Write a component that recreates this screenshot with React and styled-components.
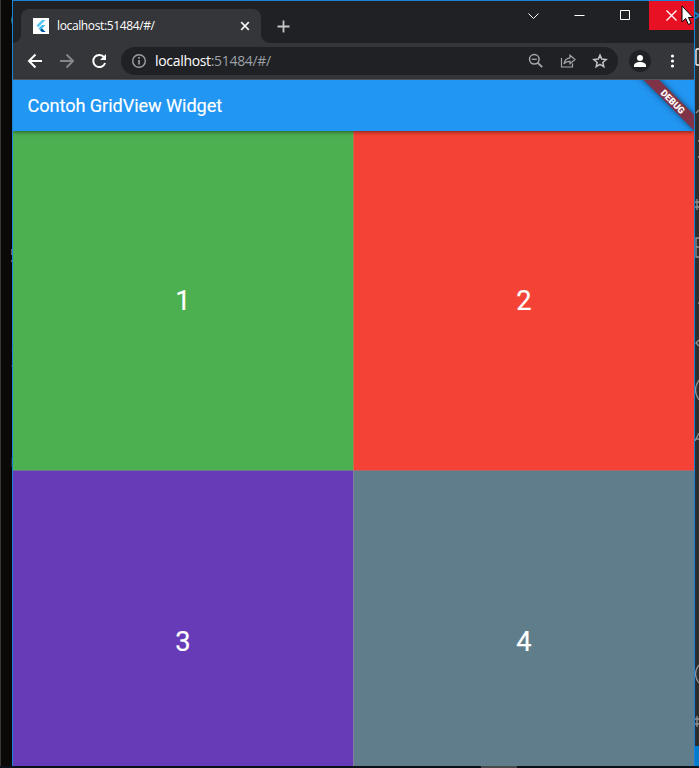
import React from "react";
import styled, { createGlobalStyle } from "styled-components";

const GlobalStyle = createGlobalStyle`
  *, *::before, *::after { box-sizing: border-box; }
  body { margin: 0; overflow: hidden; background: #0c0b0a; }
  svg { display: block; flex: none; }
`;

const Desktop = styled.div`
  position: relative;
  display: grid;
  grid-template-columns: 12px 683px 4px;
  grid-template-rows: 766px 2px;
  width: 699px;
  height: 768px;
`;

const LeftEdge = styled.div`
  border-left: 1px solid #373737;
  background: #0a0907;
`;

const BrowserWindow = styled.main`
  display: flex;
  flex-direction: column;
  min-height: 0;
  overflow: hidden;
  border: 1px solid #1883d7;
  border-bottom: 0;
  background: #202124;
`;

const EditorEdge = styled.aside`
  overflow: hidden;
  background: #2d2d2d;
`;

const Taskbar = styled.footer`
  grid-column: 1 / -1;
  display: flex;
  justify-content: flex-start;
  padding-left: 481px;
  background: #0a1118;
`;

const TaskIndicator = styled.div`
  width: 36px;
  background: #47494c;
`;

const TabStrip = styled.header`
  display: flex;
  flex: none;
  height: 42px;
`;

const Tab = styled.div`
  position: relative;
  display: flex;
  align-items: center;
  width: 240px;
  height: 34px;
  margin: 8px 0 0 8px;
  padding: 0 10px 0 12px;
  border-radius: 8px 8px 0 0;
  background: #35363a;

  &::before, &::after {
    content: "";
    position: absolute;
    bottom: 0;
    width: 8px;
    height: 8px;
  }
  &::before { left: -8px; background: radial-gradient(circle at 0 0, transparent 7.5px, #35363a 8px); }
  &::after { right: -8px; background: radial-gradient(circle at 100% 0, transparent 7.5px, #35363a 8px); }
`;

const TabTitle = styled.span`
  flex: 1;
  margin-left: 8px;
  font: 12px/16px "Open Sans", sans-serif;
  letter-spacing: -0.37px;
  color: #fff;
  white-space: nowrap;
`;

const NewTab = styled.div`
  margin: 19px 0 0 16px;
`;

const WindowControls = styled.div`
  display: flex;
  height: 29px;
  margin-left: auto;
`;

const WindowButton = styled.div`
  display: grid;
  place-items: center;
  width: ${(p) => (p.$danger ? 45 : 46)}px;
  padding-right: ${(p) => (p.$danger ? 1 : 1)}px;
  background: ${(p) => (p.$danger ? "#e81123" : "transparent")};
`;

const Toolbar = styled.nav`
  display: flex;
  align-items: center;
  flex: none;
  height: 37px;
  padding: 0 13px 1px 14px;
  border-bottom: 1px solid #5f6063;
  background: #35363a;
`;

const NavIcons = styled.div`
  display: flex;
  gap: 16px;
`;

const AddressBar = styled.div`
  display: flex;
  align-items: center;
  width: 497px;
  height: 28px;
  flex: none;
  margin-left: 14px;
  padding: 0 10px;
  border-radius: 14px;
  background: #202124;
`;

const Url = styled.span`
  flex: 1;
  margin-left: 8px;
  font: 14px/20px "Open Sans", sans-serif;
  letter-spacing: -0.32px;
  color: #9aa0a6;
  white-space: nowrap;
`;

const Host = styled.span`
  color: #fff;
`;

const AddressActions = styled.div`
  display: flex;
  gap: 16px;
`;

const Avatar = styled.div`
  display: grid;
  place-items: center;
  flex: none;
  width: 22px;
  height: 22px;
  margin: 0 14px 0 11px;
  border-radius: 50%;
  background: #202124;
`;

const AppBar = styled.header`
  position: relative;
  z-index: 1;
  display: flex;
  align-items: center;
  flex: none;
  height: 51px;
  padding-left: 14.5px;
  background: #2196f3;
  box-shadow: 0 1px 4px rgba(0, 0, 0, 0.5);
`;

const AppTitle = styled.h1`
  margin: 1px 0 0;
  font: 400 18.2px/24px Roboto, sans-serif;
  letter-spacing: -0.09px;
  -webkit-text-stroke: 0.15px #fff;
  color: #fff;
`;

const BannerClip = styled.div`
  position: absolute;
  top: 0;
  right: 0;
  width: 90px;
  height: 51px;
  overflow: hidden;
`;

const DebugBanner = styled.div`
  position: absolute;
  top: 16px;
  right: -34px;
  width: 110px;
  height: 11px;
  transform: rotate(45deg);
  background: #803247;
  box-shadow: 0 0 6px rgba(0, 0, 0, 0.55);
  font: 900 9.3px/11px Roboto, sans-serif;
  text-align: center;
  color: #fff;
`;

const Grid = styled.section`
  display: grid;
  flex: none;
  grid-template-columns: 340px 341px;
  grid-template-rows: 339px 342px;
`;

const Cell = styled.div`
  display: grid;
  place-items: center;
  padding-top: 1px;
  background: ${(p) => p.$color};
  border-left: ${(p) => (p.$leftSeam ? `1px solid ${p.$leftSeam}` : 0)};
  border-top: ${(p) => (p.$topSeam ? `1px solid ${p.$topSeam}` : 0)};
  font: 27.3px/32px Roboto, sans-serif;
  -webkit-text-stroke: 0.2px #fff;
  color: #fff;
`;

const Pointer = styled.div`
  position: absolute;
  top: 5px;
  left: 681px;
`;

const cells = [
  { label: "1", color: "#4caf50" },
  { label: "2", color: "#f44336", leftSeam: "#b8794a" },
  { label: "3", color: "#673ab7", topSeam: "#6a7b8f" },
  { label: "4", color: "#607d8b", leftSeam: "#82819b", topSeam: "#a66b68" },
];

const FlutterLogo = () => (
  <svg width="16" height="16" viewBox="0 0 16 16">
    <rect width="16" height="16" fill="#fff" />
    <path d="M9 2h3.5L5.3 9.2 3.5 7.5z" fill="#54c5f8" />
    <path d="M9 7h3.5L9 10.5l3.5 3.5H9l-3.5-3.5z" fill="#40b9ee" />
    <path d="M7.2 12.2 9 10.5l3.5 3.5H9z" fill="#01579b" />
  </svg>
);

const BackIcon = () => (
  <svg width="16" height="16" fill="none" stroke="#fff" strokeWidth="2">
    <path d="M15 8H2M8.5 1.5 2 8l6.5 6.5" />
  </svg>
);

const ForwardIcon = () => (
  <svg width="16" height="16" fill="none" stroke="#85868a" strokeWidth="2">
    <path d="M1 8h13M7.5 1.5 14 8l-6.5 6.5" />
  </svg>
);

const ReloadIcon = () => (
  <svg width="16" height="16" fill="none">
    <path d="M13.2 4.3A6.1 6.1 0 1 0 14.1 10" stroke="#fff" strokeWidth="2" />
    <path d="M15 1v6H9z" fill="#fff" />
  </svg>
);

const InfoIcon = () => (
  <svg width="16" height="16" fill="none" stroke="#9aa0a6">
    <circle cx="8" cy="8" r="6.3" strokeWidth="1.4" />
    <path d="M8 7v4.5M8 4v1.7" strokeWidth="1.7" />
  </svg>
);

const ZoomOutIcon = () => (
  <svg width="16" height="16" fill="none" stroke="#a5a7aa" strokeWidth="1.5">
    <circle cx="6.3" cy="6.3" r="4.8" />
    <path d="m9.8 9.8 4.4 4.4" strokeWidth="1.9" />
    <path d="M3.8 6.3h5" strokeWidth="1.3" />
  </svg>
);

const ShareIcon = () => (
  <svg width="16" height="16" fill="none" stroke="#a5a7aa" strokeWidth="1.2">
    <path d="M1.5 5v9h11v-3.5" />
    <path d="M10 2.2 15 6.5l-5 4.3V8.3C7.2 8.2 5.3 9 4 11c.4-3.5 2.5-5.8 6-6.2z" />
  </svg>
);

const StarIcon = () => (
  <svg width="16" height="16" fill="none" stroke="#c1c3c6" strokeWidth="1.5">
    <path d="m8 2.1 1.7 4 4.4.4-3.3 2.9 1 4.3L8 11.4l-3.8 2.3 1-4.3-3.3-2.9 4.4-.4z" />
  </svg>
);

const PersonIcon = () => (
  <svg width="14" height="14" fill="#fff">
    <circle cx="7" cy="4" r="3" />
    <path d="M1 13v-1.5C1 9.3 3.8 8 7 8s6 1.3 6 3.5V13z" />
  </svg>
);

const MenuIcon = () => (
  <svg width="16" height="16" fill="#fff">
    <circle cx="7.5" cy="3" r="1.6" />
    <circle cx="7.5" cy="8" r="1.6" />
    <circle cx="7.5" cy="13" r="1.6" />
  </svg>
);

const TabCloseIcon = () => (
  <svg width="12" height="12" stroke="#f1f1f1" strokeWidth="1.7">
    <path d="m2.2 2.2 7.6 7.6M9.8 2.2 2.2 9.8" />
  </svg>
);

const PlusIcon = () => (
  <svg width="13" height="13" stroke="#c5c6c8" strokeWidth="1.8">
    <path d="M6.5.5v12M.5 6.5h12" />
  </svg>
);

const controls = {
  chevron: <path d="M.5 3.5 5.5 8.5l5-5" />,
  minimize: <path d="M.5 5.5h10" />,
  maximize: <path d="M.5.5h9v9h-9z" />,
  close: <path d="m.5.5 10 10m0-10-10 10" strokeWidth="1.3" />,
};

const ControlIcon = ({ name }) => (
  <svg width="11" height="11" fill="none" stroke="#fff" strokeWidth="1">
    {controls[name]}
  </svg>
);

const EditorFragments = () => (
  <svg width="4" height="766" fill="none" stroke="#929292" strokeWidth="1.3">
    <path d="M0 12.5l4 3-4 3" stroke="#167fc5" strokeWidth="2" />
    <path d="M4 49H2q-1 0-1 1v14q0 1 1 1h2" stroke="#fff" />
    <path d="m1 113 3-3M3 141h1M3 157h1M0 202h4M0 207h4M2 199v11M4 238H1v19h3M1 247h3M3 303h1M4 340l-3 3 3 3M4 380q-7 10 0 20M0 441l4-8M1 439h3M4 665q-7 9 0 18M0 719h4M0 724h4M2 716v11" />
    <rect y="746" width="4" height="20" fill="#007acc" stroke="none" />
  </svg>
);

const BackdropFragments = () => (
  <svg width="11" height="766">
    <path d="M11 16q-1.5 4 0 9z" fill="#37b6c4" />
    <path d="M10 249h1v6h-1zM10 260h1v2h-1z" fill="#66686a" />
    <path d="M10 350h1v1h-1zM10 365h1v2h-1zM10 458h1v9h-1z" fill="#202b2d" />
  </svg>
);

export default function App() {
  return (
    <>
      <GlobalStyle />
      <Desktop>
        <LeftEdge><BackdropFragments /></LeftEdge>
        <BrowserWindow>
          <TabStrip>
            <Tab>
              <FlutterLogo />
              <TabTitle>localhost:51484/#/</TabTitle>
              <TabCloseIcon />
            </Tab>
            <NewTab><PlusIcon /></NewTab>
            <WindowControls>
              <WindowButton><ControlIcon name="chevron" /></WindowButton>
              <WindowButton><ControlIcon name="minimize" /></WindowButton>
              <WindowButton><ControlIcon name="maximize" /></WindowButton>
              <WindowButton $danger><ControlIcon name="close" /></WindowButton>
            </WindowControls>
          </TabStrip>
          <Toolbar>
            <NavIcons>
              <BackIcon />
              <ForwardIcon />
              <ReloadIcon />
            </NavIcons>
            <AddressBar>
              <InfoIcon />
              <Url><Host>localhost</Host>:51484/#/</Url>
              <AddressActions>
                <ZoomOutIcon />
                <ShareIcon />
                <StarIcon />
              </AddressActions>
            </AddressBar>
            <Avatar><PersonIcon /></Avatar>
            <MenuIcon />
          </Toolbar>
          <AppBar>
            <AppTitle>Contoh GridView Widget</AppTitle>
            <BannerClip><DebugBanner>DEBUG</DebugBanner></BannerClip>
          </AppBar>
          <Grid>
            {cells.map((cell) => (
              <Cell
                key={cell.label}
                $color={cell.color}
                $leftSeam={cell.leftSeam}
                $topSeam={cell.topSeam}
              >
                {cell.label}
              </Cell>
            ))}
          </Grid>
        </BrowserWindow>
        <EditorEdge><EditorFragments /></EditorEdge>
        <Taskbar><TaskIndicator /></Taskbar>
        <Pointer>
          <svg width="14" height="22" fill="#fff" stroke="#000">
            <path d="M1 1v16l3.7-3.5 2.7 6 2.8-1.2-2.7-5.8H12z" />
          </svg>
        </Pointer>
      </Desktop>
    </>
  );
}
